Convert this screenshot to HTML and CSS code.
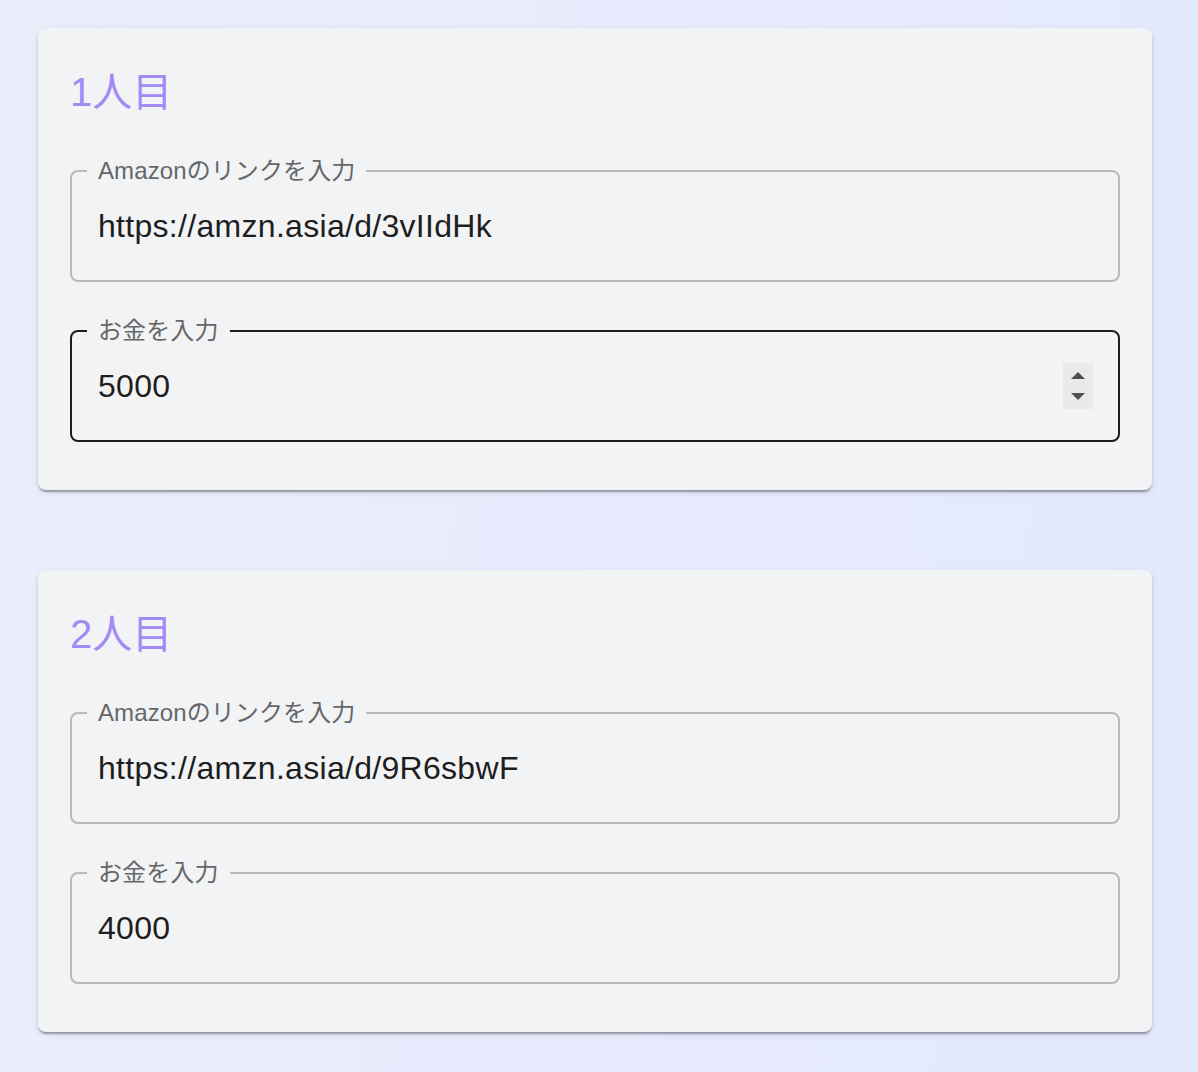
FILE: index.html
```html
<!DOCTYPE html>
<html lang="ja">
<head>
<meta charset="utf-8">
<title>Form</title>
<link rel="stylesheet" href="styles.css">
</head>
<body>
<main class="page">
  <section class="card">
    <h2 class="card-title">1人目</h2>
    <fieldset class="field">
      <legend class="field-label">Amazonのリンクを入力</legend>
      <input class="field-input" type="text" value="https://amzn.asia/d/3vIIdHk">
    </fieldset>
    <fieldset class="field field-focused">
      <legend class="field-label">お金を入力</legend>
      <div class="field-row">
        <input class="field-input" type="text" value="5000">
        <div class="spinner">
          <span class="spin-up"></span>
          <span class="spin-down"></span>
        </div>
      </div>
    </fieldset>
  </section>
  <section class="card">
    <h2 class="card-title">2人目</h2>
    <fieldset class="field">
      <legend class="field-label">Amazonのリンクを入力</legend>
      <input class="field-input" type="text" value="https://amzn.asia/d/9R6sbwF">
    </fieldset>
    <fieldset class="field">
      <legend class="field-label">お金を入力</legend>
      <input class="field-input" type="text" value="4000">
    </fieldset>
  </section>
</main>
</body>
</html>
```

FILE: styles.css
```css
html, body {
  margin: 0;
  padding: 0;
}
body {
  min-height: 1072px;
  background: linear-gradient(100deg, #eceefc 0%, #e8ebfd 50%, #e3e8fd 100%);
  font-family: "Liberation Sans", "Noto Sans CJK JP", sans-serif;
}
.page {
  padding: 28px 46px 40px 38px;
  display: flex;
  flex-direction: column;
  gap: 80px;
}
.card {
  background: #f2f3f5;
  border-radius: 8px;
  padding: 32px 32px 48px 32px;
  box-shadow: 0 4px 2px -2px rgba(0,0,0,0.2), 0 2px 2px 0 rgba(0,0,0,0.14), 0 2px 6px 0 rgba(0,0,0,0.12);
}
.card-title {
  margin: 0 0 35px 0;
  font-size: 40px;
  line-height: 64px;
  font-weight: 400;
  color: #a38af5;
}
.field {
  margin: 0;
  min-width: 0;
  border: 2px solid #b9babd;
  border-radius: 8px;
  padding: 0 25px 11px 15px;
}
.field + .field {
  margin-top: 37px;
}
.field-focused {
  border-color: #1d1d1f;
}
.field-label {
  padding: 0 11px;
  font-size: 24px;
  line-height: 24px;
  color: #666769;
  letter-spacing: 0.1px;
}
.field-row {
  display: flex;
  align-items: center;
}
.field-input {
  display: block;
  width: 100%;
  box-sizing: border-box;
  height: 86px;
  border: none;
  outline: none;
  background: transparent;
  padding: 0 11px;
  margin: 0;
  font-family: "Liberation Sans", "Noto Sans CJK JP", sans-serif;
  font-size: 32px;
  letter-spacing: 0.3px;
  color: #1e1e1e;
}
.spinner {
  flex: 0 0 30px;
  height: 46px;
  background: #eaeaeb;
  display: flex;
  flex-direction: column;
  align-items: center;
  justify-content: center;
  gap: 14px;
  margin-top: -1px;
}
.spin-up {
  width: 0;
  height: 0;
  border-left: 7px solid transparent;
  border-right: 7px solid transparent;
  border-bottom: 7px solid #4f4f4f;
}
.spin-down {
  width: 0;
  height: 0;
  border-left: 7px solid transparent;
  border-right: 7px solid transparent;
  border-top: 7px solid #4f4f4f;
}
```
